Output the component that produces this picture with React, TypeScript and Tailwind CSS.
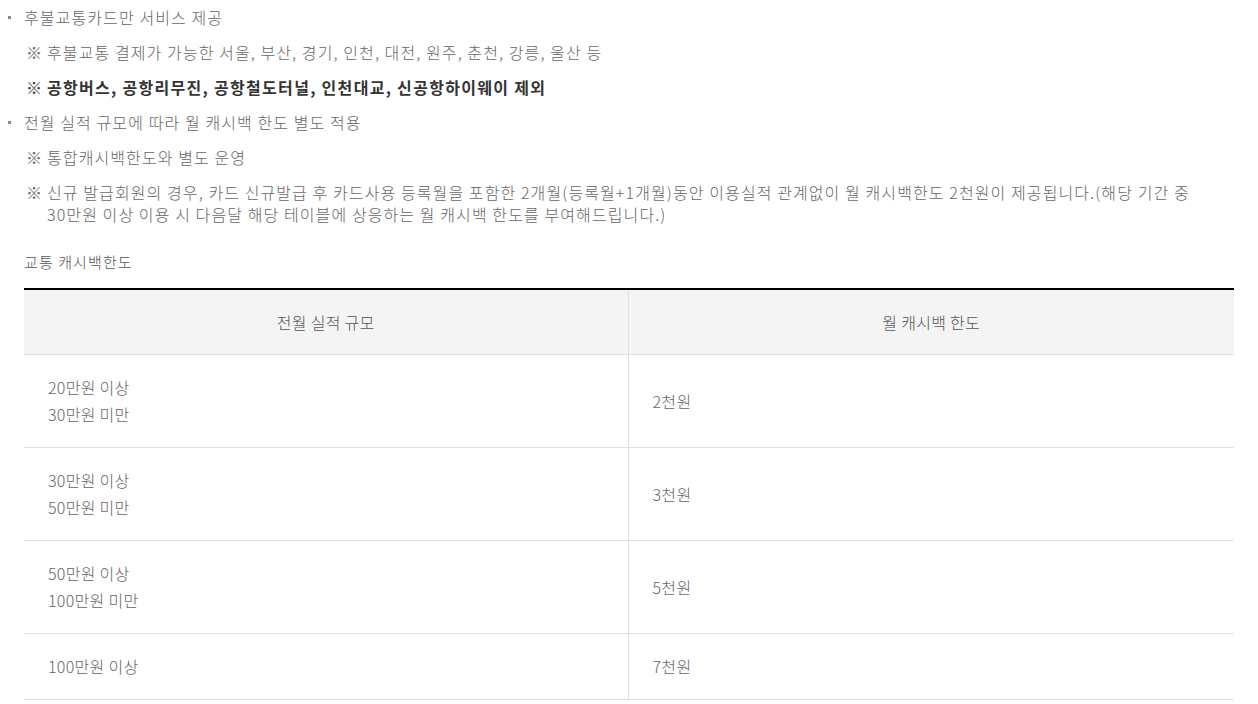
const font = { fontFamily: '"Noto Sans CJK KR", "Noto Sans", sans-serif' };

const rows = [
  { range: ['20만원 이상', '30만원 미만'], limit: '2천원' },
  { range: ['30만원 이상', '50만원 미만'], limit: '3천원' },
  { range: ['50만원 이상', '100만원 미만'], limit: '5천원' },
  { range: ['100만원 이상'], limit: '7천원' },
];

function Bullet({ children }: { children: React.ReactNode }) {
  return (
    <li className="relative pl-[24px]">
      <span className="absolute left-[8px] top-[10px] h-[3px] w-[3px] bg-[#888]"></span>
      {children}
    </li>
  );
}

function Note({ children, bold }: { children: React.ReactNode; bold?: boolean }) {
  return (
    <li className={`pl-[47px] -indent-[21px] ${bold ? 'font-bold text-[#333] tracking-[1.3px]' : ''}`}>
      <span className="inline-block w-[21px] indent-0 leading-[22px] tracking-normal">※</span>
      {children}
    </li>
  );
}

export default function App() {
  return (
    <div className="bg-white pt-[6px] pr-[24px] text-[16px] leading-[22px] tracking-[1.1px] text-[#666] font-light break-keep" style={font}>
      <ul className="flex flex-col gap-[13px]">
        <Bullet>후불교통카드만 서비스 제공</Bullet>
        <Note>후불교통 결제가 가능한 서울, 부산, 경기, 인천, 대전, 원주, 춘천, 강릉, 울산 등</Note>
        <Note bold>공항버스, 공항리무진, 공항철도터널, 인천대교, 신공항하이웨이 제외</Note>
        <Bullet>전월 실적 규모에 따라 월 캐시백 한도 별도 적용</Bullet>
        <Note>통합캐시백한도와 별도 운영</Note>
        <Note>
          신규 발급회원의 경우, 카드 신규발급 후 카드사용 등록월을 포함한 2개월(등록월+1개월)동안 이용실적 관계없이 월 캐시백한도 2천원이 제공됩니다.(해당 기간 중 30만원 이상 이용 시 다음달 해당 테이블에 상응하는 월 캐시백 한도를 부여해드립니다.)
        </Note>
      </ul>

      <p className="mt-[26px] pl-[24px] text-[15px] text-[#555]">교통 캐시백한도</p>

      <div className="mt-[15px] ml-[24px] w-[1210px]">
        <table className="w-full border-collapse border-t-2 border-black text-[16px] tracking-[0.3px]">
          <thead>
            <tr className="bg-[#f4f4f4]">
              <th className="w-[604px] border-b border-r border-[#e0e0e0] py-[21px] text-center font-light leading-[22px] text-[#555]">
                전월 실적 규모
              </th>
              <th className="border-b border-[#e0e0e0] py-[21px] text-center font-light leading-[22px] text-[#555]">
                월 캐시백 한도
              </th>
            </tr>
          </thead>
          <tbody>
            {rows.map((r) => (
              <tr key={r.limit}>
                <td className="border-b border-r border-[#e0e0e0] px-[24px] py-[19px] leading-[27px]">
                  {r.range.map((t) => (
                    <div key={t}>{t}</div>
                  ))}
                </td>
                <td className="border-b border-[#e0e0e0] px-[24px] py-[19px] leading-[27px]">{r.limit}</td>
              </tr>
            ))}
          </tbody>
        </table>
      </div>
    </div>
  );
}
